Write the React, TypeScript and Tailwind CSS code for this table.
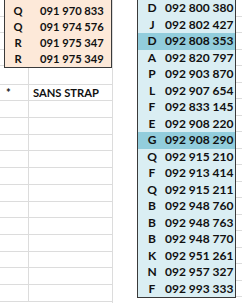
import React from "react";

const left: [string, string][] = [
  ["Q", "091 970 833"],
  ["Q", "091 974 576"],
  ["R", "091 975 347"],
  ["R", "091 975 349"],
];

const right: [string, string][] = [
  ["D", "092 800 380"],
  ["J", "092 802 427"],
  ["D", "092 808 353"],
  ["A", "092 820 797"],
  ["P", "092 903 870"],
  ["L", "092 907 654"],
  ["F", "092 833 145"],
  ["E", "092 908 220"],
  ["G", "092 908 290"],
  ["Q", "092 915 210"],
  ["F", "092 913 414"],
  ["Q", "092 915 211"],
  ["B", "092 948 760"],
  ["B", "092 948 763"],
  ["B", "092 948 770"],
  ["K", "092 951 261"],
  ["N", "092 957 327"],
  ["F", "092 993 333"],
];

const highlighted = new Set([2, 8]);

export default function App() {
  const gridRows = Array.from({ length: 14 });
  const stubRows = Array.from({ length: 19 });
  return (
    <div
      className="flex w-[242px] h-[303px] overflow-hidden bg-white text-[#111] font-bold"
      style={{ fontFamily: "Lato, 'Open Sans', sans-serif" }}
    >
      {/* left section */}
      <div className="flex flex-col w-[113px] shrink-0 border-r border-[#dcdcdc]">
        <div className="flex">
          <div className="w-[4px] flex flex-col">
            {left.map((_, i) => (
              <div key={i} className="h-[16.5px] border-b border-[#dcdcdc]" />
            ))}
          </div>
          <div className="flex-1 flex flex-col bg-[#fde9d9] border-x border-b border-[#3a3a3a] pt-[2px]">
            {left.map(([l, n], i) => (
              <div key={i} className="flex items-center h-[16.25px] text-[11.2px] leading-none">
                <span className="w-[26px] text-center">{l}</span>
                <span className="pl-[9px]">{n}</span>
              </div>
            ))}
          </div>
        </div>
        {gridRows.map((_, i) => (
          <div key={i} className="flex h-[16.7px] border-b border-[#dcdcdc] shrink-0 items-center text-[11.2px] leading-none">
            <div className="w-[29px] h-full border-r border-[#dcdcdc] flex items-center pl-[6px]">
              {i === 1 ? "*" : ""}
            </div>
            <div className="pl-[4px]">{i === 1 ? "SANS STRAP" : ""}</div>
          </div>
        ))}
      </div>

      {/* gap column */}
      <div className="w-[24px] shrink-0" />

      {/* right block */}
      <div className="flex flex-col self-start w-[99px] shrink-0 bg-[#daeef3] border-x border-b border-[#3a3a3a]">
        {right.map(([l, n], i) => (
          <div
            key={i}
            className={`flex items-center h-[16.5px] text-[12px] leading-none ${
              highlighted.has(i) ? "bg-[#92cddc]" : ""
            }`}
          >
            <span className="w-[27px] text-center pl-[1px]">{l}</span>
            <span>{n}</span>
          </div>
        ))}
      </div>

      {/* right gridline stubs */}
      <div className="flex-1 flex flex-col">
        {stubRows.map((_, i) => (
          <div key={i} className="h-[16.5px] shrink-0 border-b border-[#dcdcdc]" />
        ))}
      </div>
    </div>
  );
}
